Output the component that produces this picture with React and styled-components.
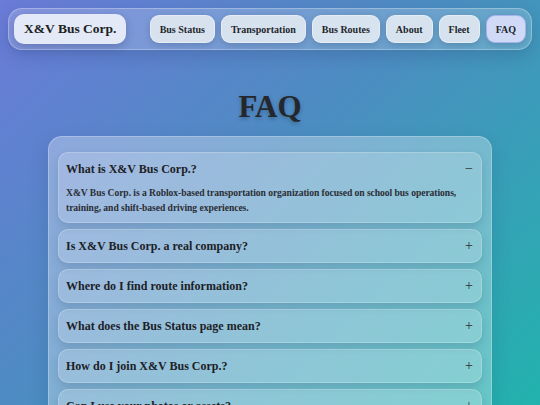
import React, { useState } from 'react';
import styled, { createGlobalStyle } from 'styled-components';

const GlobalStyle = createGlobalStyle`
  html, body {
    margin: 0;
    padding: 0;
    height: 100%;
  }
  body {
    font-family: 'Liberation Serif', 'DejaVu Serif', serif;
    color: #1f2328;
    background: linear-gradient(135deg, #6b7bd8 0%, #4d8cc2 45%, #22b3ad 100%);
    background-attachment: fixed;
    min-height: 405px;
    overflow: hidden;
  }
`;

const faqs = [
  {
    q: 'What is X&V Bus Corp.?',
    a: 'X&V Bus Corp. is a Roblox-based transportation organization focused on school bus operations, training, and shift-based driving experiences.',
  },
  { q: 'Is X&V Bus Corp. a real company?', a: '' },
  { q: 'Where do I find route information?', a: '' },
  { q: 'What does the Bus Status page mean?', a: '' },
  { q: 'How do I join X&V Bus Corp.?', a: '' },
  { q: 'Can I use your photos or assets?', a: '' },
];

const links = ['Bus Status', 'Transportation', 'Bus Routes', 'About', 'Fleet', 'FAQ'];

export default function App() {
  const [open, setOpen] = useState(0);

  return (
    <Page>
      <GlobalStyle />
      <Nav>
        <Logo>X&amp;V Bus Corp.</Logo>
        <Links>
          {links.map((l) => (
            <NavLink key={l} active={l === 'FAQ'}>
              {l}
            </NavLink>
          ))}
        </Links>
      </Nav>

      <Title>FAQ</Title>

      <Card>
        {faqs.map((f, i) => (
          <Item key={f.q} onClick={() => setOpen(open === i ? -1 : i)}>
            <Question>
              <span>{f.q}</span>
              <Toggle>{open === i ? '−' : '+'}</Toggle>
            </Question>
            {open === i && f.a && <Answer>{f.a}</Answer>}
          </Item>
        ))}
      </Card>
    </Page>
  );
}

const Page = styled.div`
  padding: 8px 8px 0 8px;
  min-height: 397px;
`;

const Nav = styled.nav`
  display: flex;
  align-items: center;
  justify-content: space-between;
  height: 42px;
  padding: 0 5px;
  width: 524px;
  box-sizing: border-box;
  border-radius: 14px;
  background: rgba(255, 255, 255, 0.18);
  border: 1px solid rgba(255, 255, 255, 0.28);
  box-shadow: 0 6px 16px rgba(30, 40, 90, 0.18);
`;

const Logo = styled.div`
  display: flex;
  align-items: center;
  height: 30px;
  padding: 0 10px;
  border-radius: 10px;
  white-space: nowrap;
  background: rgba(236, 240, 250, 0.92);
  box-shadow: 0 3px 8px rgba(20, 30, 70, 0.25);
  font-size: 13.5px;
  font-weight: 700;
  color: #1c1f24;
`;

const Links = styled.div`
  display: flex;
  gap: 6px;
`;

const NavLink = styled.div`
  display: flex;
  align-items: center;
  height: 26px;
  padding: 0 9px;
  border-radius: 9px;
  white-space: nowrap;
  font-size: 10px;
  font-weight: 700;
  color: #22262b;
  background: ${(p) => (p.active ? 'rgba(214, 220, 250, 0.95)' : 'rgba(226, 234, 242, 0.9)')};
  border: 1px solid ${(p) => (p.active ? 'rgba(160, 175, 235, 0.9)' : 'rgba(255, 255, 255, 0.4)')};
  box-shadow: 0 2px 6px rgba(20, 30, 70, 0.2);
`;

const Title = styled.h1`
  margin: 37px 0 0 0;
  height: 49px;
  line-height: 40px;
  text-align: center;
  font-size: 31px;
  font-weight: 700;
  color: #24272b;
  text-shadow: 0 2px 4px rgba(0, 0, 0, 0.25);
`;

const Card = styled.div`
  margin: 0 40px;
  padding: 15px 9px;
  display: flex;
  flex-direction: column;
  gap: 6px;
  border-radius: 14px;
  background: rgba(255, 255, 255, 0.3);
  border: 1px solid rgba(255, 255, 255, 0.25);
  box-shadow: 0 8px 20px rgba(20, 40, 80, 0.15);
`;

const Item = styled.div`
  padding: 0 8px 0 7px;
  border-radius: 10px;
  background: rgba(255, 255, 255, 0.18);
  border: 1px solid rgba(255, 255, 255, 0.22);
  box-shadow: 0 4px 8px rgba(20, 60, 90, 0.18);
  cursor: pointer;
`;

const Question = styled.div`
  display: flex;
  align-items: center;
  justify-content: space-between;
  height: 32px;
  white-space: nowrap;
  font-size: 12px;
  font-weight: 700;
  color: #1d2126;
`;

const Toggle = styled.span`
  font-size: 14px;
  font-weight: 400;
  color: #2a2e33;
`;

const Answer = styled.p`
  margin: 0 0 7px 0;
  font-size: 9.6px;
  letter-spacing: -0.05px;
  line-height: 15px;
  font-weight: 700;
  color: #2a2e35;
`;
